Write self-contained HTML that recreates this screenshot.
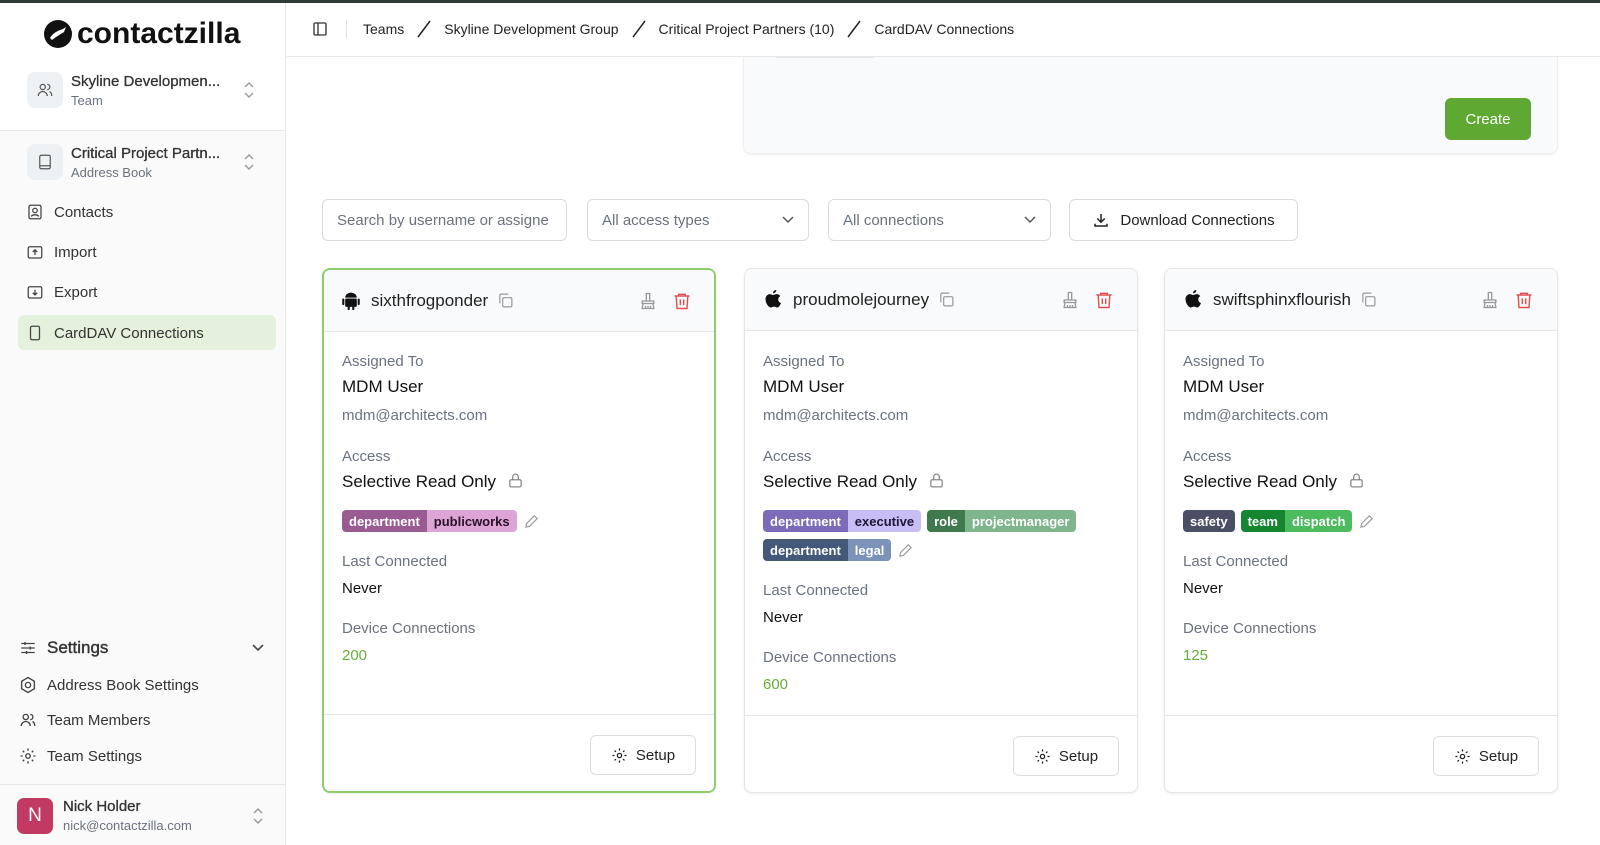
<!DOCTYPE html>
<html><head><meta charset="utf-8">
<style>
*{box-sizing:border-box;margin:0;padding:0}
body{width:1600px;height:845px;overflow:hidden;font-family:"Liberation Sans",sans-serif;background:#fff;color:#111;position:relative}
.abs{position:absolute}
.topstrip{left:0;top:0;width:1600px;height:3px;background:#2f3b36}
.side{left:0;top:3px;width:286px;height:842px;background:#fafafa;border-right:1px solid #e8e8e8}
.sidetop{left:0;top:3px;width:286px;height:128px;background:#fff;border-bottom:1px solid #e6e6e6;border-right:1px solid #e8e8e8}
.logo{left:43px;top:17px;font-size:30px;font-weight:bold;letter-spacing:0px;display:flex;align-items:center;gap:4px;color:#111}
.sw{display:flex;align-items:center}
.swicon{width:36px;height:36px;border-radius:8px;background:#eef1f3;display:flex;align-items:center;justify-content:center}
.t1{font-size:15px;color:#333;-webkit-text-stroke:0.3px #333}
.t2{font-size:13px;color:#6b7280;margin-top:3px}
.nav{left:26px;font-size:15px;color:#333;display:flex;align-items:center;gap:10px}
.active{left:18px;top:315px;width:258px;height:35px;background:#e4f1dc;border-radius:6px}
.main-head{left:287px;top:3px;width:1313px;height:54px;border-bottom:1px solid #e8e8e8;background:#fff}
.bc{left:363px;top:20px;font-size:14px;color:#222;display:flex;align-items:center;gap:12px;height:18px}
.inp{top:199px;height:42px;border:1px solid #dcdcdc;border-radius:6px;font-size:15px;color:#6b7280;display:flex;align-items:center;padding:0 14px;justify-content:space-between;background:#fff}
.topcard{left:743px;top:57px;width:815px;height:97px;background:#f8fafb;border:1px solid #eceeef;border-top:none;border-radius:0 0 8px 8px;box-shadow:0 1px 3px rgba(0,0,0,.06)}
.create{left:1445px;top:98px;width:86px;height:42px;background:#5fa832;color:#fff;font-size:15px;border-radius:6px;display:flex;align-items:center;justify-content:center}
.card{top:268px;width:394px;height:525px;border:1px solid #e6e6e6;border-radius:8px;background:#fff;box-shadow:0 1px 3px rgba(0,0,0,.07);overflow:hidden}
.card.sel{border:2px solid #8fcd6c}
.ch{height:62px;background:#f8fafb;border-bottom:1px solid #e8e8e8;display:flex;align-items:center;padding:0 18px;position:relative}
.uname{font-size:17px;color:#222;margin-left:10px}
.cb{padding:0 18px;position:relative}
.lab{font-size:15px;color:#6b7280;position:absolute;left:18px}
.val{font-size:17px;color:#111;position:absolute;left:18px}
.tags{position:absolute;left:18px;display:flex;gap:6px;align-items:center}
.tag{display:flex;height:22px;border-radius:4px;overflow:hidden;font-size:13px;font-weight:bold}
.tag span{padding:0 7px;display:flex;align-items:center}
.foot{position:absolute;left:0;right:0;top:446px;border-top:1px solid #e8e8e8;height:80px;background:#fff}
.setup{position:absolute;right:18px;top:20px;width:106px;height:40px;border:1px solid #dedede;border-radius:6px;font-size:15px;display:flex;align-items:center;justify-content:center;gap:8px;color:#222;background:#fff}
.updown{position:absolute}
</style></head><body>
<div class="abs topstrip"></div>
<div class="abs side"></div>
<div class="abs sidetop"></div>
<div class="abs logo"><svg width="30" height="30" viewBox="0 0 30 30"><circle cx="15" cy="15" r="14" fill="#111"/><path d="M7 19 C10 14 14 12 20 10 L23 8 L21 13 C18 15 14 17 9 21Z" fill="#fff"/></svg><span>contactzilla</span></div>
<svg width="0" height="0" style="position:absolute"><defs></defs></svg>
<div class="abs sw" style="left:27px;top:72px"><div class="swicon"><svg width="18" height="18" viewBox="0 0 24 24" fill="none" stroke="#555" stroke-width="1.6"><circle cx="9" cy="8" r="3.5"/><path d="M3 20c0-3.5 3-6 6-6s6 2.5 6 6"/><path d="M15 4.5a3.5 3.5 0 010 7M18 14c2 1 3 3 3 6"/></svg></div><div style="margin-left:8px"><div class="t1">Skyline Developmen...</div><div class="t2">Team</div></div></div>
<svg class="updown" style="left:242px;top:81px" width="14" height="18" viewBox="0 0 14 18" fill="none" stroke="#999" stroke-width="1.4"><path d="M3 6l4-4 4 4M3 12l4 4 4-4"/></svg>
<div class="abs sw" style="left:27px;top:144px"><div class="swicon"><svg width="18" height="18" viewBox="0 0 24 24" fill="none" stroke="#555" stroke-width="1.6"><rect x="5" y="3" width="14" height="18" rx="2"/><path d="M5 17h14"/></svg></div><div style="margin-left:8px"><div class="t1">Critical Project Partn...</div><div class="t2">Address Book</div></div></div>
<svg class="updown" style="left:242px;top:153px" width="14" height="18" viewBox="0 0 14 18" fill="none" stroke="#999" stroke-width="1.4"><path d="M3 6l4-4 4 4M3 12l4 4 4-4"/></svg>
<div class="abs active"></div>
<div class="abs nav" style="top:203px"><svg width="18" height="18" viewBox="0 0 24 24" fill="none" stroke="#444" stroke-width="1.7"><rect x="4" y="3" width="16" height="18" rx="2"/><circle cx="12" cy="10" r="3"/><path d="M7 18c1-3 9-3 10 0"/></svg>Contacts</div>
<div class="abs nav" style="top:243px"><svg width="18" height="18" viewBox="0 0 24 24" fill="none" stroke="#444" stroke-width="1.7"><rect x="3" y="5" width="18" height="15" rx="2"/><path d="M12 16V9M9 12l3-3 3 3"/></svg>Import</div>
<div class="abs nav" style="top:283px"><svg width="18" height="18" viewBox="0 0 24 24" fill="none" stroke="#444" stroke-width="1.7"><rect x="3" y="5" width="18" height="15" rx="2"/><path d="M12 9v7M9 13l3 3 3-3"/></svg>Export</div>
<div class="abs nav" style="top:324px"><svg width="18" height="18" viewBox="0 0 24 24" fill="none" stroke="#444" stroke-width="1.7"><rect x="6" y="3" width="12" height="18" rx="2"/></svg>CardDAV Connections</div>
<div class="abs nav" style="top:638px;font-size:17px;left:19px;-webkit-text-stroke:0.4px #333"><svg width="18" height="18" viewBox="0 0 24 24" fill="none" stroke="#444" stroke-width="1.8"><path d="M3 6h18M3 12h18M3 18h18M8 4v4M15 10v4M10 16v4"/></svg>Settings</div>
<svg class="abs" style="left:251px;top:643px" width="14" height="10" viewBox="0 0 14 10" fill="none" stroke="#444" stroke-width="1.6"><path d="M2 2l5 5 5-5"/></svg>
<div class="abs nav" style="top:676px;left:19px"><svg width="18" height="18" viewBox="0 0 24 24" fill="none" stroke="#444" stroke-width="1.8"><path d="M12 2l8.5 5v10L12 22l-8.5-5V7z"/><circle cx="12" cy="12" r="3.5"/></svg>Address Book Settings</div>
<div class="abs nav" style="top:711px;left:19px"><svg width="18" height="18" viewBox="0 0 24 24" fill="none" stroke="#444" stroke-width="1.8"><circle cx="9" cy="8" r="3.5"/><path d="M3 20c0-3.5 3-6 6-6s6 2.5 6 6"/><path d="M15 4.5a3.5 3.5 0 010 7M18 14c2 1 3 3 3 6"/></svg>Team Members</div>
<div class="abs nav" style="top:747px;left:19px"><svg width="18" height="18" viewBox="0 0 24 24" fill="none" stroke="#444" stroke-width="1.8"><circle cx="12" cy="12" r="3"/><path d="M12 2v3M12 19v3M2 12h3M19 12h3M5 5l2 2M17 17l2 2M5 19l2-2M17 7l2-2"/></svg>Team Settings</div>
<div class="abs" style="left:0;top:784px;width:286px;border-top:1px solid #e6e6e6"></div>
<div class="abs" style="left:17px;top:798px;width:36px;height:36px;border-radius:7px;background:#c23a62;color:#fff;font-size:19px;display:flex;align-items:center;justify-content:center">N</div>
<div class="abs" style="left:63px;top:798px"><div style="font-size:15px;color:#333;-webkit-text-stroke:0.3px #333">Nick Holder</div><div style="font-size:13px;color:#6b7280;margin-top:3px">nick@contactzilla.com</div></div>
<svg class="updown" style="left:251px;top:807px" width="14" height="18" viewBox="0 0 14 18" fill="none" stroke="#999" stroke-width="1.4"><path d="M3 6l4-4 4 4M3 12l4 4 4-4"/></svg>

<div class="abs topcard"></div>
<div class="abs" style="left:773px;top:52px;width:104px;height:6px;border:1px solid #e4e4e4;border-top:none;border-radius:0 0 5px 5px"></div>
<div class="abs main-head"></div>
<div class="abs" style="left:312px;top:21px"><svg width="16" height="16" viewBox="0 0 24 24" fill="none" stroke="#333" stroke-width="2"><rect x="3" y="3" width="18" height="18" rx="2"/><path d="M9 3v18"/></svg></div>
<div class="abs" style="left:346px;top:20px;height:18px;border-left:1px solid #e4e4e4"></div>
<div class="abs bc"><span>Teams</span><svg width="16" height="18" viewBox="0 0 16 18"><path d="M2 17L14 1" stroke="#222" stroke-width="1.5"/></svg><span>Skyline Development Group</span><svg width="16" height="18" viewBox="0 0 16 18"><path d="M2 17L14 1" stroke="#222" stroke-width="1.5"/></svg><span>Critical Project Partners (10)</span><svg width="16" height="18" viewBox="0 0 16 18"><path d="M2 17L14 1" stroke="#222" stroke-width="1.5"/></svg><span>CardDAV Connections</span></div>
<div class="abs create">Create</div>

<div class="abs inp" style="left:322px;width:245px">Search by username or assigne</div>
<div class="abs inp" style="left:587px;width:222px">All access types<svg width="12" height="8" viewBox="0 0 12 8" fill="none" stroke="#555" stroke-width="1.5"><path d="M1 1l5 5 5-5"/></svg></div>
<div class="abs inp" style="left:828px;width:223px">All connections<svg width="12" height="8" viewBox="0 0 12 8" fill="none" stroke="#555" stroke-width="1.5"><path d="M1 1l5 5 5-5"/></svg></div>
<div class="abs inp" style="left:1069px;width:229px;color:#222;justify-content:center;gap:10px"><svg width="18" height="18" viewBox="0 0 24 24" fill="none" stroke="#222" stroke-width="2"><path d="M12 4v11M7 10l5 5 5-5M4 17v3h16v-3"/></svg>Download Connections</div>

<div class="abs card sel" style="left:322px">
 <div class="ch" style="padding-left:17px"><svg width="20" height="20" viewBox="0 0 24 24" fill="#111"><rect x="5" y="9" width="14" height="10" rx="1.5"/><path d="M5 8a7 6 0 0114 0z"/><rect x="1.5" y="9" width="2.5" height="8" rx="1.2"/><rect x="20" y="9" width="2.5" height="8" rx="1.2"/><rect x="8" y="18" width="2.5" height="5" rx="1.2"/><rect x="13.5" y="18" width="2.5" height="5" rx="1.2"/></svg><span class="uname">sixthfrogponder</span><svg style="margin-left:9px" width="17" height="17" viewBox="0 0 24 24" fill="none" stroke="#999" stroke-width="1.7"><rect x="8" y="8" width="13" height="13" rx="2"/><path d="M4 16V5a2 2 0 012-2h10"/></svg>
 <svg style="position:absolute;right:56px" width="20" height="20" viewBox="0 0 24 24" fill="none" stroke="#999" stroke-width="1.6"><path d="M10 3h4v9h-4zM5 12h14v3H5zM6 15l-1 6h14l-1-6M9 18v3M12 18v3M15 18v3"/></svg>
 <svg style="position:absolute;right:22px" width="20" height="20" viewBox="0 0 24 24" fill="none" stroke="#e05050" stroke-width="1.7"><path d="M3 6h18M8 6V4h8v2M5 6l1 15h12l1-15M10 10v7M14 10v7"/></svg></div>
 <div class="cb">
  <div class="lab" style="top:21px">Assigned To</div>
  <div class="val" style="top:45px">MDM User</div>
  <div class="lab" style="top:75px">mdm@architects.com</div>
  <div class="lab" style="top:116px">Access</div>
  <div class="val" style="top:140px">Selective Read Only <svg style="vertical-align:-2px;margin-left:6px" width="17" height="17" viewBox="0 0 24 24" fill="none" stroke="#888" stroke-width="1.8"><rect x="4" y="11" width="16" height="10" rx="2"/><path d="M8 11V7a4 4 0 018 0v4"/></svg></div>
  <div class="tags" style="top:178px"><div class="tag"><span style="background:#9a5b92;color:#fff">department</span><span style="background:#dca5d5;color:#2a0f28">publicworks</span></div><svg width="17" height="17" viewBox="0 0 24 24" fill="none" stroke="#999" stroke-width="1.6"><path d="M4 20l1-5L16 4l4 4L9 19z"/></svg></div>
  <div class="lab" style="top:221px">Last Connected</div>
  <div class="val" style="top:248px;font-size:15px">Never</div>
  <div class="lab" style="top:288px">Device Connections</div>
  <div class="lab" style="top:315px;color:#66ad3c">200</div>
 </div>
 <div class="foot" style="top:444px"><div class="setup"><svg width="17" height="17" viewBox="0 0 24 24" fill="none" stroke="#222" stroke-width="1.8"><circle cx="12" cy="12" r="3"/><path d="M12 2v3M12 19v3M2 12h3M19 12h3M5 5l2 2M17 17l2 2M5 19l2-2M17 7l2-2"/></svg>Setup</div></div>
</div>

<div class="abs card" style="left:744px">
 <div class="ch"><svg width="20" height="22" viewBox="0 0 24 26" fill="#111"><path d="M16 1c0 2-1.5 4-4 4 0-2 1.5-4 4-4zM12 7c1.5 0 2.5-1 4.5-1 1.5 0 3.2.8 4.2 2.3-3.6 2-3 7 .8 8.4-.8 2.4-2.6 5.3-4.5 5.3-1.5 0-2-1-3.800-1s-2.5 1-4 1c-2.3 0-6.2-5-6.2-10.2C3 8.6 5.6 6 8 6c1.7 0 2.7 1 4 1z"/></svg><span class="uname">proudmolejourney</span><svg style="margin-left:9px" width="17" height="17" viewBox="0 0 24 24" fill="none" stroke="#999" stroke-width="1.7"><rect x="8" y="8" width="13" height="13" rx="2"/><path d="M4 16V5a2 2 0 012-2h10"/></svg>
 <svg style="position:absolute;right:57px" width="20" height="20" viewBox="0 0 24 24" fill="none" stroke="#999" stroke-width="1.6"><path d="M10 3h4v9h-4zM5 12h14v3H5zM6 15l-1 6h14l-1-6M9 18v3M12 18v3M15 18v3"/></svg>
 <svg style="position:absolute;right:23px" width="20" height="20" viewBox="0 0 24 24" fill="none" stroke="#e05050" stroke-width="1.7"><path d="M3 6h18M8 6V4h8v2M5 6l1 15h12l1-15M10 10v7M14 10v7"/></svg></div>
 <div class="cb">
  <div class="lab" style="top:22px">Assigned To</div>
  <div class="val" style="top:46px">MDM User</div>
  <div class="lab" style="top:76px">mdm@architects.com</div>
  <div class="lab" style="top:117px">Access</div>
  <div class="val" style="top:141px">Selective Read Only <svg style="vertical-align:-2px;margin-left:6px" width="17" height="17" viewBox="0 0 24 24" fill="none" stroke="#888" stroke-width="1.8"><rect x="4" y="11" width="16" height="10" rx="2"/><path d="M8 11V7a4 4 0 018 0v4"/></svg></div>
  <div class="tags" style="top:179px"><div class="tag"><span style="background:#7c6bb8;color:#fff">department</span><span style="background:#c8bdf4;color:#1e1538">executive</span></div><div class="tag"><span style="background:#3f7a4f;color:#fff">role</span><span style="background:#7fb58c;color:#fff">projectmanager</span></div></div>
  <div class="tags" style="top:208px"><div class="tag"><span style="background:#44597a;color:#fff">department</span><span style="background:#7b93b8;color:#fff">legal</span></div><svg width="17" height="17" viewBox="0 0 24 24" fill="none" stroke="#999" stroke-width="1.6"><path d="M4 20l1-5L16 4l4 4L9 19z"/></svg></div>
  <div class="lab" style="top:251px">Last Connected</div>
  <div class="val" style="top:278px;font-size:15px">Never</div>
  <div class="lab" style="top:318px">Device Connections</div>
  <div class="lab" style="top:345px;color:#66ad3c">600</div>
 </div>
 <div class="foot"><div class="setup"><svg width="17" height="17" viewBox="0 0 24 24" fill="none" stroke="#222" stroke-width="1.8"><circle cx="12" cy="12" r="3"/><path d="M12 2v3M12 19v3M2 12h3M19 12h3M5 5l2 2M17 17l2 2M5 19l2-2M17 7l2-2"/></svg>Setup</div></div>
</div>

<div class="abs card" style="left:1164px">
 <div class="ch"><svg width="20" height="22" viewBox="0 0 24 26" fill="#111"><path d="M16 1c0 2-1.5 4-4 4 0-2 1.5-4 4-4zM12 7c1.5 0 2.5-1 4.5-1 1.5 0 3.2.8 4.2 2.3-3.6 2-3 7 .8 8.4-.8 2.4-2.6 5.3-4.5 5.3-1.5 0-2-1-3.8-1s-2.5 1-4 1c-2.3 0-6.2-5-6.2-10.2C3 8.6 5.6 6 8 6c1.7 0 2.7 1 4 1z"/></svg><span class="uname">swiftsphinxflourish</span><svg style="margin-left:9px" width="17" height="17" viewBox="0 0 24 24" fill="none" stroke="#999" stroke-width="1.7"><rect x="8" y="8" width="13" height="13" rx="2"/><path d="M4 16V5a2 2 0 012-2h10"/></svg>
 <svg style="position:absolute;right:57px" width="20" height="20" viewBox="0 0 24 24" fill="none" stroke="#999" stroke-width="1.6"><path d="M10 3h4v9h-4zM5 12h14v3H5zM6 15l-1 6h14l-1-6M9 18v3M12 18v3M15 18v3"/></svg>
 <svg style="position:absolute;right:23px" width="20" height="20" viewBox="0 0 24 24" fill="none" stroke="#e05050" stroke-width="1.7"><path d="M3 6h18M8 6V4h8v2M5 6l1 15h12l1-15M10 10v7M14 10v7"/></svg></div>
 <div class="cb">
  <div class="lab" style="top:22px">Assigned To</div>
  <div class="val" style="top:46px">MDM User</div>
  <div class="lab" style="top:76px">mdm@architects.com</div>
  <div class="lab" style="top:117px">Access</div>
  <div class="val" style="top:141px">Selective Read Only <svg style="vertical-align:-2px;margin-left:6px" width="17" height="17" viewBox="0 0 24 24" fill="none" stroke="#888" stroke-width="1.8"><rect x="4" y="11" width="16" height="10" rx="2"/><path d="M8 11V7a4 4 0 018 0v4"/></svg></div>
  <div class="tags" style="top:179px"><div class="tag"><span style="background:#4b4f66;color:#fff">safety</span></div><div class="tag"><span style="background:#15862f;color:#fff">team</span><span style="background:#4cbb5e;color:#fff">dispatch</span></div><svg width="17" height="17" viewBox="0 0 24 24" fill="none" stroke="#999" stroke-width="1.6"><path d="M4 20l1-5L16 4l4 4L9 19z"/></svg></div>
  <div class="lab" style="top:222px">Last Connected</div>
  <div class="val" style="top:249px;font-size:15px">Never</div>
  <div class="lab" style="top:289px">Device Connections</div>
  <div class="lab" style="top:316px;color:#66ad3c">125</div>
 </div>
 <div class="foot"><div class="setup"><svg width="17" height="17" viewBox="0 0 24 24" fill="none" stroke="#222" stroke-width="1.8"><circle cx="12" cy="12" r="3"/><path d="M12 2v3M12 19v3M2 12h3M19 12h3M5 5l2 2M17 17l2 2M5 19l2-2M17 7l2-2"/></svg>Setup</div></div>
</div>
</body></html>
